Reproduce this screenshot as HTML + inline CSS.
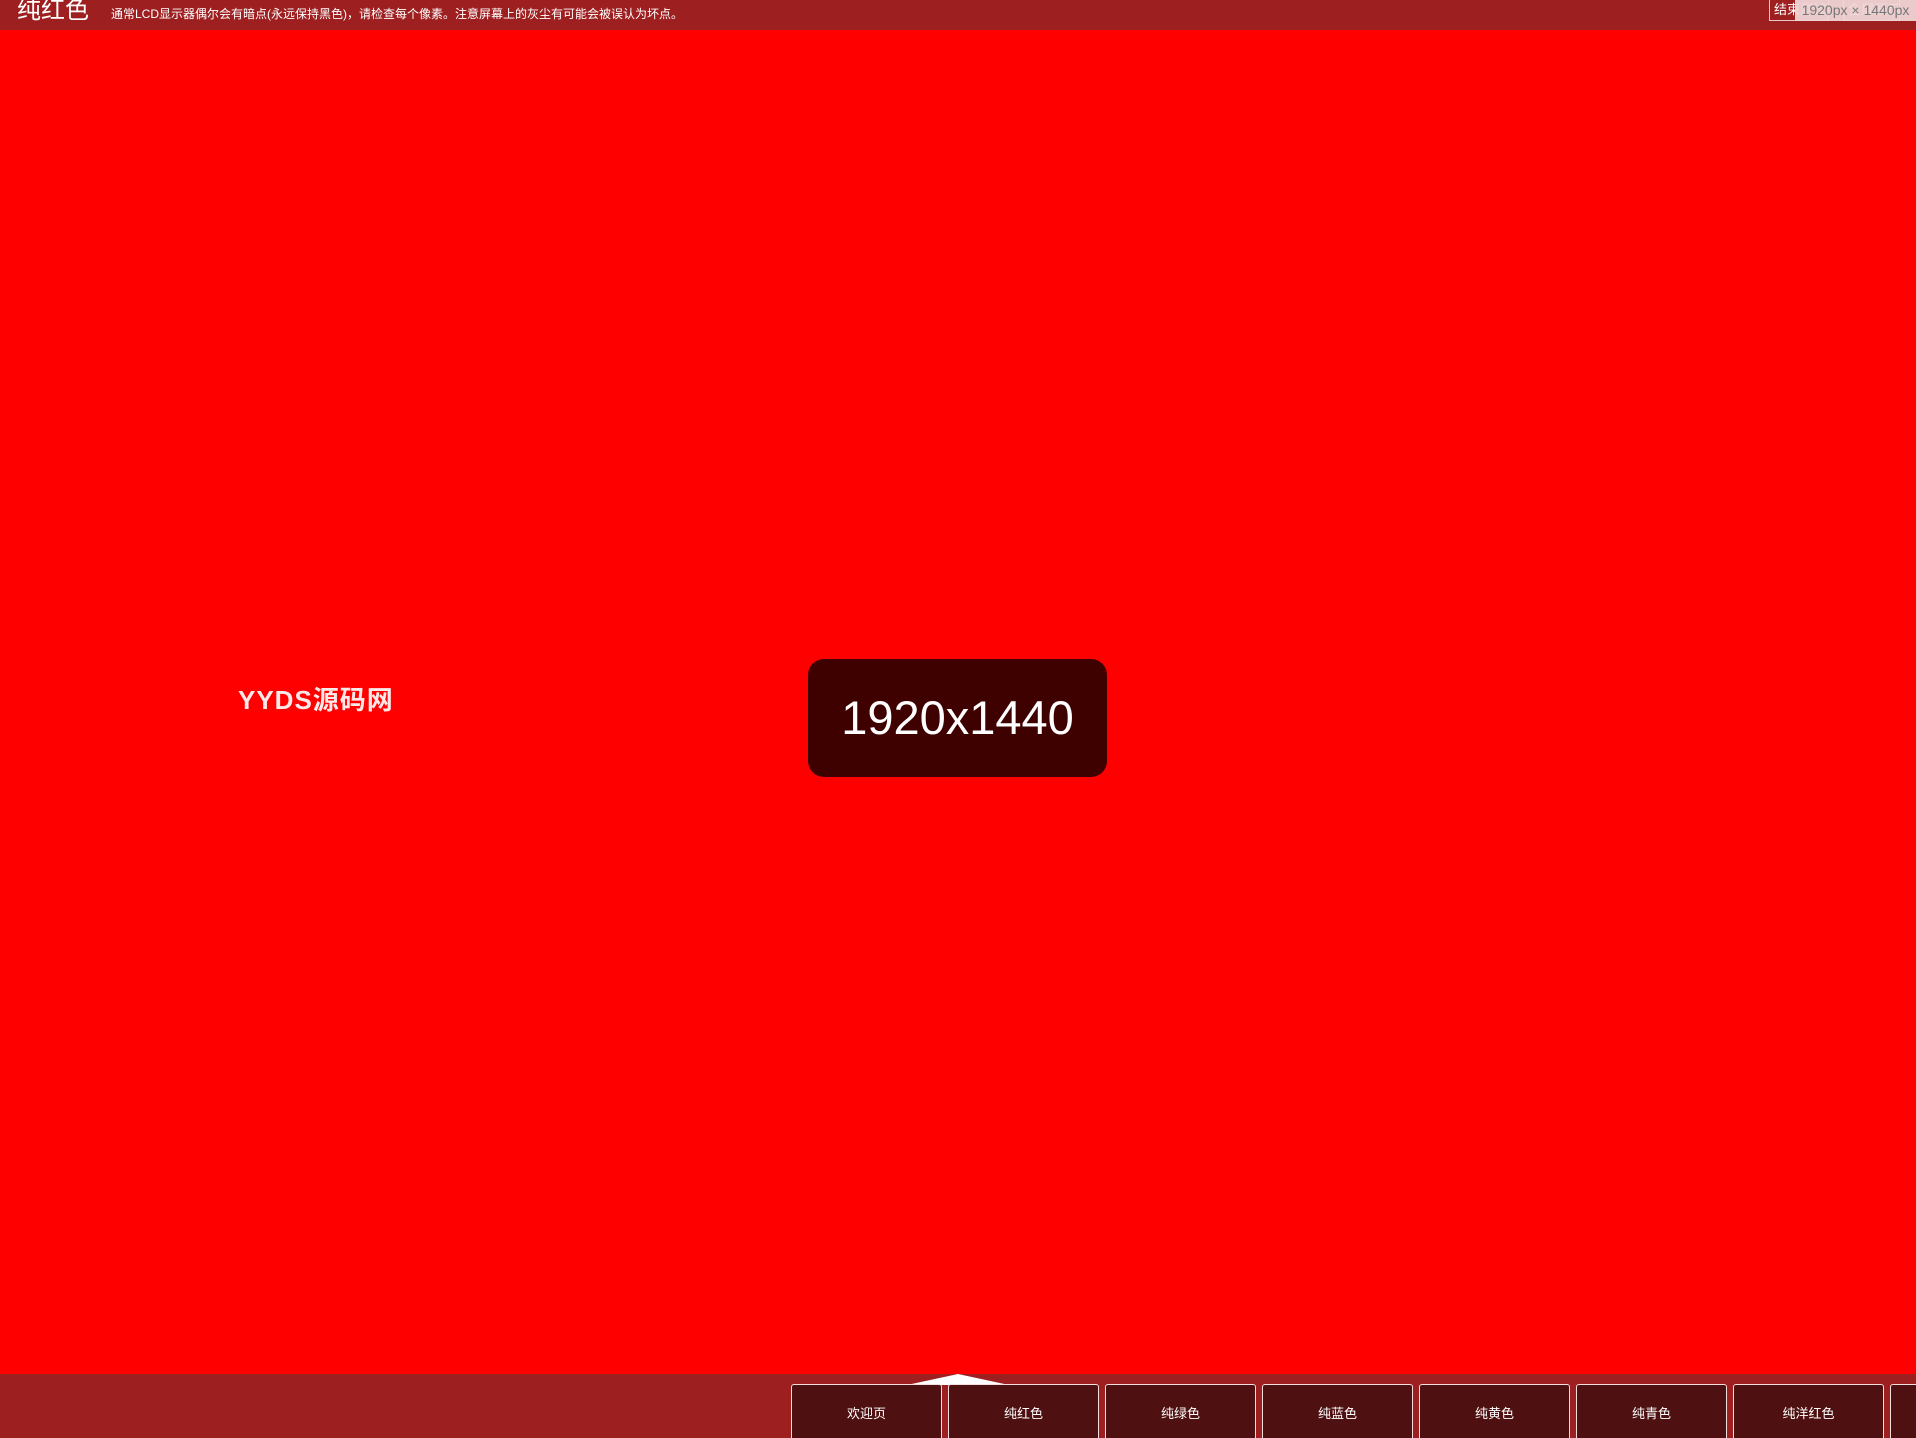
<!DOCTYPE html>
<html style="overflow:hidden;width:1916px;height:1438px"><head><meta charset="utf-8"><style>
*{margin:0;padding:0;box-sizing:border-box}
body{width:1916px;height:1438px;overflow:hidden;background:#ff0000;position:relative;font-family:"Liberation Sans","Noto Sans CJK SC",sans-serif}
.top{position:absolute;left:0;top:0;width:1916px;height:30px;background:#9e1f20;color:#fff}
.title{position:absolute;left:17px;top:-3px;font-size:24px;line-height:28px}
.desc{position:absolute;left:111px;top:7px;font-size:12px;line-height:14px;white-space:nowrap}
.btn{position:absolute;top:0;height:21px;border:1px solid #e8c8c8;border-top:none;color:#fff;font-size:13px;line-height:19px;padding:0 4px;white-space:nowrap;overflow:hidden}
.ov{position:absolute;left:1795px;top:0;width:121px;height:21px;background:rgba(240,215,215,.93);color:#777;font-size:14px;line-height:21px;text-align:center}
.logo{position:absolute;left:238px;top:680px;color:#fbe8e8;font-size:26px;font-weight:bold;letter-spacing:1px;white-space:nowrap}
.box{position:absolute;left:808px;top:659px;width:299px;height:118px;border-radius:16px;background:#3f0000;color:#fff;font-size:47px;text-align:center;line-height:118px}
.bot{position:absolute;left:0;top:1374px;width:1916px;height:64px;background:#9e1f20}
.tri{position:absolute;left:907px;top:1374px;width:0;height:0;border-left:51px solid transparent;border-right:51px solid transparent;border-bottom:11px solid #fff}
.b{position:absolute;top:1384px;width:151px;height:54px;background:#4f1011;border:1px solid #f3dede;border-bottom:none;border-radius:3px 3px 0 0;color:#fff;font-size:13px;text-align:center;line-height:58px;white-space:nowrap;overflow:hidden}
</style></head><body>
<div class="top">
<div class="title">纯红色</div>
<div class="desc">通常LCD显示器偶尔会有暗点(永远保持黑色)，请检查每个像素。注意屏幕上的灰尘有可能会被误认为坏点。</div>
<div class="btn" style="left:1769px;width:60px">结束测试</div>
<div class="btn" style="left:1843px;width:57px">全屏展示</div>
<div class="ov">1920px × 1440px</div>
</div>
<div class="logo">YYDS源码网</div>
<div class="box">1920x1440</div>
<div class="bot"></div>
<div class="tri"></div>
<div class="b" style="left:791px">欢迎页</div>
<div class="b" style="left:948px">纯红色</div>
<div class="b" style="left:1105px">纯绿色</div>
<div class="b" style="left:1262px">纯蓝色</div>
<div class="b" style="left:1419px">纯黄色</div>
<div class="b" style="left:1576px">纯青色</div>
<div class="b" style="left:1733px">纯洋红色</div>
<div class="b" style="left:1890px">纯白色</div>
</body></html>
